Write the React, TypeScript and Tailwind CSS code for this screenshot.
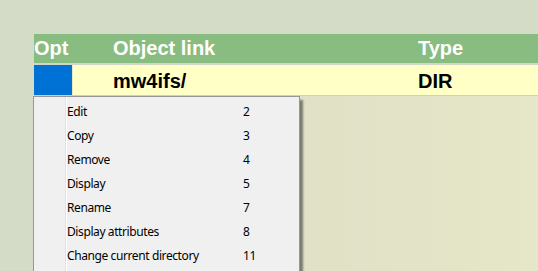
const items: [string, string][] = [
  ["Edit", "2"],
  ["Copy", "3"],
  ["Remove", "4"],
  ["Display", "5"],
  ["Rename", "7"],
  ["Display attributes", "8"],
  ["Change current directory", "11"],
];

export default function App() {
  return (
    <div className="relative w-[538px] h-[271px] overflow-hidden bg-[#d4dcc8] flex flex-col pt-[34px] pl-[34px]">
      {/* Header */}
      <div className="flex h-[29px] bg-[#88bc80] text-white font-bold text-[20px] leading-[29px] font-['Liberation_Sans',Arial,sans-serif] border-b-2 border-[#d2d6c8] box-content">
        <div className="w-[79px]">Opt</div>
        <div className="w-[305px]">Object link</div>
        <div className="flex-1">Type</div>
      </div>

      {/* Data row */}
      <div className="flex h-[30px] bg-[#ffffc6] text-black font-bold text-[20px] leading-[32px] font-['Liberation_Sans',Arial,sans-serif] border-b border-[#cfcfc4] box-content">
        <div className="w-[38px] bg-[#0072d6] border-r border-[#e8e8c0] box-content"></div>
        <div className="w-[40px]"></div>
        <div className="w-[305px]">mw4ifs/</div>
        <div className="flex-1">DIR</div>
      </div>

      {/* Area below table */}
      <div className="flex-1 bg-gradient-to-r from-[#dad9c5] to-[#e6e7c8]"></div>

      {/* Context menu */}
      <div className="absolute left-[33px] top-[96px] w-[267px] h-[190px] bg-[#f0f0f0] border border-[#979797] shadow-[3px_4px_2px_rgba(0,0,0,0.45)] flex font-['Noto_Sans',sans-serif] text-[12px] tracking-[-0.4px] text-black">
        <div className="w-[31px]"></div>
        <div className="flex-1 border-l border-[#e2e2e2] shadow-[inset_1px_0_0_#ffffff] pt-[3px] pl-px">
          {items.map(([label, key]) => (
            <div key={label} className="flex h-[24px] leading-[24px]">
              <span className="w-[176px]">{label}</span>
              <span>{key}</span>
            </div>
          ))}
        </div>
      </div>
    </div>
  );
}
